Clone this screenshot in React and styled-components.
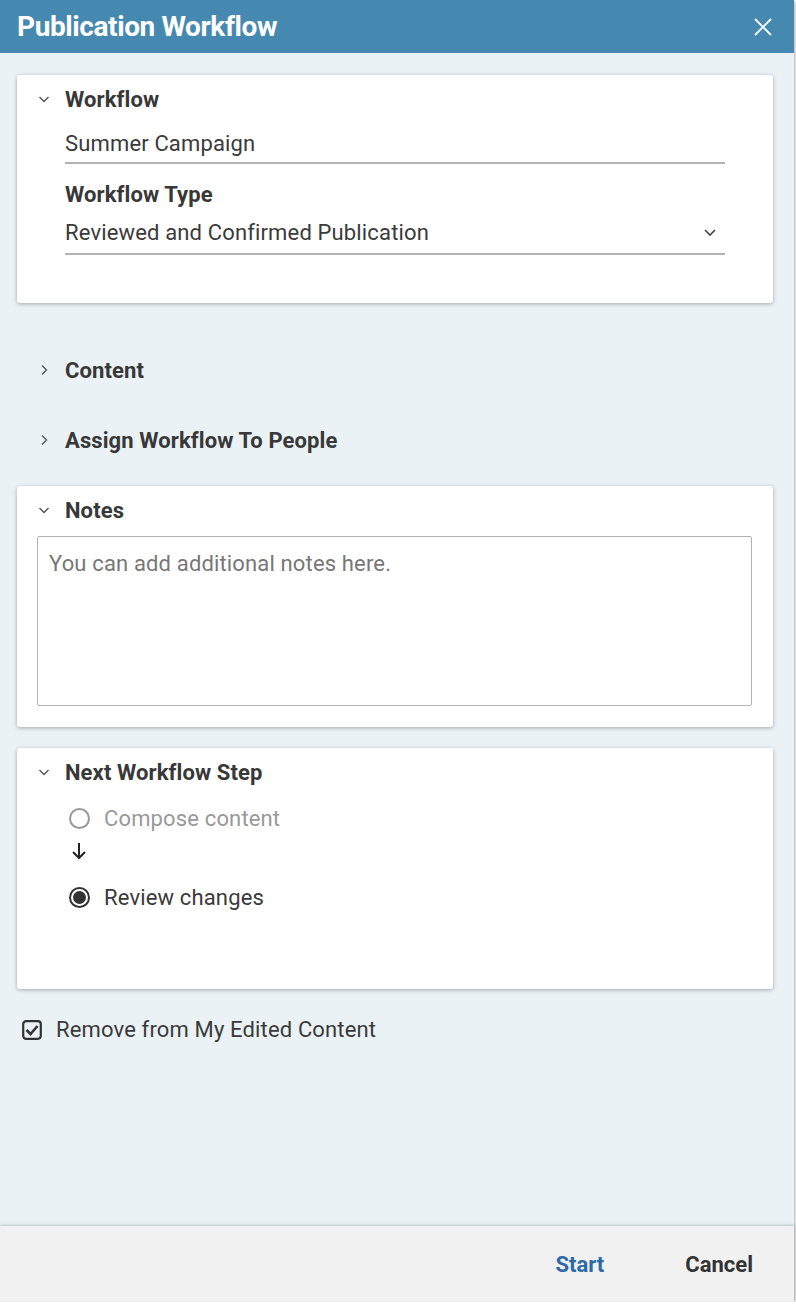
import * as React from "react"
import styled, { createGlobalStyle } from "styled-components";

const Global = createGlobalStyle`
  html, body { margin: 0; padding: 0; background: #fff; }
  body { font-family: Roboto, "Noto Sans", sans-serif; color: #333; }
  * { box-sizing: border-box; }
`;

const Dialog = styled.div`
  width: 794px;
  height: 1302px;
  display: flex;
  flex-direction: column;
  background: #eaf2f6;
  box-shadow: 1px 1px 4px rgba(0,0,0,0.35);
`;

const Header = styled.div`
  height: 53px;
  flex: none;
  background: #4689b0;
  display: flex;
  align-items: center;
  justify-content: space-between;
  padding: 0 22px 0 17px;
  h1 {
    margin: 0;
    color: #fff;
    font-size: 28px;
    font-weight: 700;
    letter-spacing: -0.4px;
  }
`;

const Body = styled.div`
  flex: 1;
  padding: 22px 21px 0 17px;
  display: flex;
  flex-direction: column;
`;

const Card = styled.section`
  background: #fff;
  border-radius: 3px;
  box-shadow: 0 1px 4px rgba(0,0,0,0.3);
  padding: 12px 48px 0 20px;
  height: ${p => p.h}px;
  margin-top: ${p => p.mt || 0}px;
  margin-bottom: ${p => p.mb || 0}px;
`;

const SectionHead = styled.div`
  display: flex;
  align-items: center;
  height: 24px;
  font-size: 22px;
  font-weight: 700;
  letter-spacing: 0.1px;
  color: #383838;
  svg { width: 14px; height: 14px; margin-right: 14px; flex: none; }
`;

const Chevron = ({ open }) => (
  <svg viewBox="0 0 14 14" fill="none" stroke="#555" strokeWidth="1.4">
    {open ? <path d="M2.5 5 L7 9.5 L11.5 5" /> : <path d="M5 2.5 L9.5 7 L5 11.5" />}
  </svg>
);

const Field = styled.div`
  margin-left: 28px;
  margin-top: ${p => p.mt || 0}px;
  border-bottom: 2px solid #b3b3b3;
  height: ${p => p.h}px;
  display: flex;
  align-items: center;
  justify-content: space-between;
  padding-right: 8px;
  font-size: 22px;
  letter-spacing: 0.15px;
  color: #3a3a3a;
`;

const Label = styled.div`
  margin: 18px 0 0 28px;
  line-height: 26px;
  font-size: 22px;
  font-weight: 700;
  letter-spacing: 0.1px;
  color: #383838;
`;

const TextArea = styled.div`
  margin: 14px -27px 0 0;
  height: 170px;
  border: 1px solid #b3b3b3;
  border-radius: 2px;
  padding: 14px 11px;
  font-size: 22px;
  letter-spacing: 0.15px;
  color: #777;
`;

const Steps = styled.div`
  margin: 18px 0 0 32px;
  display: flex;
  flex-direction: column;
`;

const Step = styled.div`
  display: flex;
  align-items: center;
  height: 32px;
  font-size: 22px;
  letter-spacing: 0.15px;
  color: ${p => (p.active ? "#3a3a3a" : "#999")};
`;

const Radio = styled.span`
  width: 21px;
  height: 21px;
  border-radius: 50%;
  border: 2px solid ${p => (p.active ? "#333" : "#999")};
  margin-right: 14px;
  display: flex;
  align-items: center;
  justify-content: center;
  &::after {
    content: "";
    display: ${p => (p.active ? "block" : "none")};
    width: 13px;
    height: 13px;
    border-radius: 50%;
    background: #333;
  }
`;

const Arrow = styled.div`
  height: 47px;
  padding: 8px 0 0 2px;
`;

const Collapsed = styled.div`
  padding-left: 20px;
  margin-top: ${p => p.mt}px;
`;

const CheckRow = styled.div`
  display: flex;
  align-items: center;
  margin: 28px 0 0 5px;
  font-size: 22px;
  letter-spacing: 0.15px;
  color: #3a3a3a;
  svg { margin-right: 14px; }
`;

const Footer = styled.div`
  height: 76px;
  flex: none;
  background: #f1f1f1;
  box-shadow: 0 -1px 3px rgba(0,0,0,0.2);
  display: flex;
  align-items: center;
  justify-content: flex-end;
  padding-right: 41px;
  gap: 81px;
`;

const Button = styled.button`
  border: none;
  background: none;
  padding: 0;
  font-family: inherit;
  font-size: 22px;
  font-weight: 700;
  color: ${p => (p.primary ? "#2e6aa8" : "#333")};
`;

export default function App() {
  return (
    <>
      <Global />
      <Dialog>
        <Header>
          <h1>Publication Workflow</h1>
          <svg width="18" height="18" viewBox="0 0 18 18" stroke="#fff" strokeWidth="1.8" fill="none">
            <path d="M1 1 L17 17 M17 1 L1 17" />
          </svg>
        </Header>
        <Body>
          <Card h={228}>
            <SectionHead><Chevron open />Workflow</SectionHead>
            <Field mt={13} h={40}>Summer Campaign</Field>
            <Label>Workflow Type</Label>
            <Field mt={3} h={44}>
              Reviewed and Confirmed Publication
              <svg width="14" height="14" viewBox="0 0 14 14" fill="none" stroke="#444" strokeWidth="1.6">
                <path d="M2 5 L7 10 L12 5" />
              </svg>
            </Field>
          </Card>
          <Collapsed mt={55}><SectionHead><Chevron />Content</SectionHead></Collapsed>
          <Collapsed mt={46}><SectionHead><Chevron />Assign Workflow To People</SectionHead></Collapsed>
          <Card h={241} mt={34} mb={21}>
            <SectionHead><Chevron open />Notes</SectionHead>
            <TextArea>You can add additional notes here.</TextArea>
          </Card>
          <Card h={241}>
            <SectionHead><Chevron open />Next Workflow Step</SectionHead>
            <Steps>
              <Step><Radio />Compose content</Step>
              <Arrow>
                <svg width="16" height="18" viewBox="0 0 16 18" fill="none" stroke="#222" strokeWidth="2">
                  <path d="M8 1 V16 M2 10 L8 16 L14 10" />
                </svg>
              </Arrow>
              <Step active><Radio active />Review changes</Step>
            </Steps>
          </Card>
          <CheckRow>
            <svg width="20" height="20" viewBox="0 0 20 20" fill="none" stroke="#333" strokeWidth="2.2">
              <rect x="1.2" y="1.2" width="17.6" height="17.6" rx="3" />
              <path d="M4.5 10 L8.5 14 L15.5 6" strokeWidth="2.6" />
            </svg>
            Remove from My Edited Content
          </CheckRow>
        </Body>
        <Footer>
          <Button primary>Start</Button>
          <Button>Cancel</Button>
        </Footer>
      </Dialog>
    </>
  );
}
